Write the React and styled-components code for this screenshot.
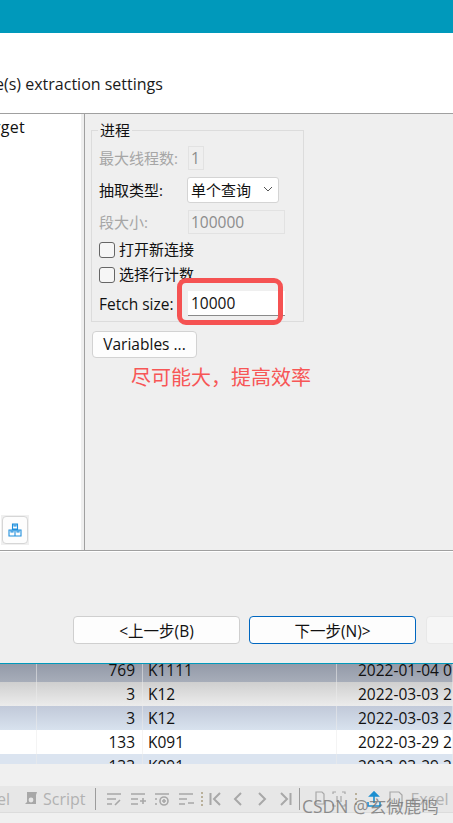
import React from "react";
import styled, { createGlobalStyle } from "styled-components";

const FONT = `"Open Sans", "Noto Sans CJK SC", "Noto Sans", sans-serif`;

const Global = createGlobalStyle`
  html, body { margin: 0; padding: 0; background: #f0f0f0; overflow: hidden; }
  body { font-family: ${FONT}; font-size: 15px; color: #111; }
`;

const Page = styled.div`
  position: relative;
  width: 453px;
  height: 823px;
  overflow: hidden;
  display: flex;
  flex-direction: column;
`;
const TitleBar = styled.div`
  height: 33px;
  background: #0099bb;
  flex: none;
`;
const Header = styled.div`
  height: 80px;
  flex: none;
  background: #fff;
  display: flex;
  align-items: flex-end;
  padding-bottom: 18px;
  box-sizing: border-box;
`;
const HeaderTitle = styled.div`
  font-size: 16px;
  line-height: 22px;
  white-space: nowrap;
  margin-left: -36.5px;
  color: #1a1a1a;
`;
const Body = styled.div`
  height: 436px;
  flex: none;
  display: flex;
  border-top: 1px solid #a0a0a0;
  border-bottom: 1px solid #a0a0a0;
  box-sizing: content-box;
  background: #efefef;
`;
const Sidebar = styled.div`
  width: 81px;
  flex: none;
  background: #fff;
  display: flex;
  flex-direction: column;
  justify-content: space-between;
  padding-bottom: 5px;
  box-sizing: border-box;
`;
const SideItem = styled.div`
  font-size: 16px;
  line-height: 26px;
  white-space: nowrap;
  margin-left: -24px;
  letter-spacing: 0.2px;
`;
const SideTool = styled.div`
  width: 28px;
  height: 30px;
  margin-left: 1px;
  background: #f0f0f0;
  display: flex;
  align-items: center;
  justify-content: center;
`;
const SideButton = styled.button`
  width: 26px;
  height: 28px;
  padding: 0;
  background: #fdfdfd;
  border: 1px solid #d6d6d6;
  border-radius: 4px;
  display: flex;
  align-items: center;
  justify-content: center;
`;
const Splitter = styled.div`
  width: 3px;
  flex: none;
  background: #efefef;
  border-right: 1px solid #a0a0a0;
  box-sizing: content-box;
`;
const Settings = styled.div`
  flex: 1;
  padding: 16px 0 0 6px;
  display: flex;
  flex-direction: column;
  align-items: flex-start;
`;
const Group = styled.div`
  position: relative;
  width: 213px;
  height: 192px;
  box-sizing: border-box;
  border: 1px solid #dcdcdc;
  padding: 15px 0 0 7px;
  display: flex;
  flex-direction: column;
`;
const Legend = styled.div`
  position: absolute;
  top: -10px;
  left: 6px;
  padding: 0 2px;
  background: #efefef;
  font-size: 15px;
  line-height: 18px;
`;
const Row = styled.div`
  display: flex;
  align-items: center;
  height: ${(p) => p.$h}px;
  margin-bottom: ${(p) => p.$gap}px;
`;
const Label = styled.span`
  width: 89px;
  flex: none;
  font-size: ${(p) => (p.$latin ? "15.5px" : "15px")};
  padding-bottom: ${(p) => (p.$latin ? "0" : "2px")};
  white-space: nowrap;
  color: ${(p) => (p.$disabled ? "#a6a6a6" : "#111")};
`;
const Field = styled.div`
  width: ${(p) => p.$w}px;
  height: 100%;
  box-sizing: border-box;
  padding-left: 2px;
  border: 1px solid ${(p) => (p.$disabled ? "#e2e2e2" : "#fff")};
  background: ${(p) => (p.$disabled ? "#efefef" : "#fff")};
  color: ${(p) => (p.$disabled ? "#8c8c8c" : "#111")};
  font-size: 15.5px;
  display: flex;
  align-items: center;
`;
const ActiveField = styled(Field)`
  border: none;
  padding-left: 3px;
  border-bottom: 1px solid #8a8a8a;
`;
const Select = styled.div`
  width: 92px;
  height: 100%;
  margin-left: -1px;
  box-sizing: border-box;
  background: #fff;
  border: 1px solid #d4d4d4;
  border-radius: 3px;
  padding: 0 5px 2px 3px;
  font-size: 15px;
  display: flex;
  align-items: center;
  justify-content: space-between;
`;
const CheckRow = styled.label`
  display: flex;
  align-items: center;
  gap: 4px;
  height: 16px;
  margin-bottom: ${(p) => p.$gap}px;
  font-size: 15px;
`;
const CheckText = styled.span`
  margin-top: -3px;
`;
const CheckBox = styled.span`
  width: 16px;
  height: 16px;
  box-sizing: border-box;
  border: 1px solid #666;
  border-radius: 3px;
  background: #f6f6f6;
`;
const PlainButton = styled.button`
  font-family: ${FONT};
  font-size: 15.5px;
  color: #111;
  background: #fdfdfd;
  border: 1px solid #d2d2d2;
  border-radius: 4px;
  padding: 0;
`;
const VariablesButton = styled(PlainButton)`
  width: 105px;
  height: 27px;
  margin-top: 9px;
  margin-left: 1px;
  padding-bottom: 2px;
`;
const Footer = styled.div`
  height: 112px;
  flex: none;
  box-sizing: border-box;
  background: #efefef;
  border-top: 1px solid #fff;
  padding: 64px 0 0 73px;
  display: flex;
  gap: 9px;
  overflow: hidden;
`;
const WizardButton = styled(PlainButton)`
  width: 167px;
  height: 28px;
  flex: none;
  border-color: ${(p) => (p.$primary ? "#0067c0" : "#cfcfcf")};
`;
const GhostButton = styled(WizardButton)`
  margin-left: 1px;
  background: #f6f6f6;
  border-color: #e8e8e8;
`;
const Table = styled.div`
  height: 101px;
  flex: none;
  box-sizing: border-box;
  border-top: 1px solid #0099bb;
  overflow: hidden;
  display: flex;
  flex-direction: column;
  justify-content: flex-end;
  background: #fff;
`;
const TableRow = styled.div`
  height: 24px;
  flex: none;
  display: grid;
  grid-template-columns: 37px 106px 194px 1fr;
  background: ${(p) => p.$bg};
  color: #111;
  font-size: 15.5px;
  line-height: 24px;
`;
const Cell = styled.div`
  box-sizing: border-box;
  border-right: 1px solid rgba(235, 235, 235, 0.55);
  white-space: nowrap;
  overflow: hidden;
  padding: 0 ${(p) => (p.$num ? "7px" : "0")} 0 ${(p) => p.$pad || 0}px;
  text-align: ${(p) => (p.$num ? "right" : "left")};
`;
const TableEnd = styled.div`
  height: 10px;
  flex: none;
  overflow: hidden;
`;
const Gap = styled.div`
  height: 22px;
  flex: none;
  background: #f0f0f0;
`;
const Toolbar = styled.div`
  height: 27px;
  flex: none;
  background: #e7e7e7;
  border-bottom: 1px solid #dcdcdc;
  box-sizing: border-box;
  display: flex;
  align-items: center;
  overflow: hidden;
  color: #b2b2b2;
`;
const ToolText = styled.span`
  font-size: 16px;
  white-space: nowrap;
  flex: none;
  margin-left: ${(p) => p.$ml || 0}px;
`;
const ToolSlot = styled.span`
  flex: none;
  width: ${(p) => p.$w || 24}px;
  margin-left: ${(p) => p.$ml || 0}px;
  height: 18px;
  display: flex;
  align-items: center;
  justify-content: center;
`;
const Divider = styled.span`
  flex: none;
  width: 1px;
  height: 22px;
  background: #9c9c9c;
  margin: 0 ${(p) => p.$r || 0}px 0 ${(p) => p.$l || 0}px;
`;
const Rest = styled.div`
  flex: 1;
  background: #f0f0f0;
`;
const Highlight = styled.div`
  position: absolute;
  left: 177px;
  top: 278px;
  width: 106px;
  height: 47px;
  box-sizing: border-box;
  border: 5px solid #f55252;
  border-radius: 9px;
  pointer-events: none;
`;
const Note = styled.div`
  position: absolute;
  left: 131px;
  top: 364px;
  font-size: 20px;
  line-height: 28px;
  color: #f75656;
  white-space: nowrap;
`;
const Watermark = styled.div`
  position: absolute;
  left: 302px;
  top: 794px;
  font-size: 17.5px;
  line-height: 24px;
  color: rgba(110, 110, 110, 0.75);
  white-space: nowrap;
`;

const Ico = ({ w = 16, h = 16, color = "#a8a8a8", sw = 1.6, children }) => (
  <svg width={w} height={h} viewBox={`0 0 ${w} ${h}`} fill="none" stroke={color} strokeWidth={sw}>
    {children}
  </svg>
);

const rows = [
  { bg: "linear-gradient(#8d94a3,#a7adb9)", n: "769", k: "K1111", d: "2022-01-04 09:15:22" },
  { bg: "linear-gradient(#cfcfcf,#ececec)", n: "3", k: "K12", d: "2022-03-03 21:15:22" },
  { bg: "linear-gradient(#c1c9d9,#d8e2ee)", n: "3", k: "K12", d: "2022-03-03 21:15:22" },
  { bg: "#ffffff", n: "133", k: "K091", d: "2022-03-29 21:15:22" },
];

const DataRow = ({ r }) => (
  <TableRow $bg={r.bg}>
    <Cell />
    <Cell $num>{r.n}</Cell>
    <Cell $pad={5}>{r.k}</Cell>
    <Cell $pad={21}>{r.d}</Cell>
  </TableRow>
);

export default function App() {
  return (
    <Page>
      <Global />
      <TitleBar />
      <Header>
        <HeaderTitle>Table(s) extraction settings</HeaderTitle>
      </Header>
      <Body>
        <Sidebar>
          <SideItem>Target</SideItem>
          <SideTool>
            <SideButton aria-label="packages">
              <Ico w={14} h={14} color="#1f8fdc" sw={1.1}>
                <path d="M4.5 1h5v5h-5zM1 7h6v6H1zM7 7h6v6H7zM6 1v2h2V1M3 7v2h2V7M9 7v2h2V7" />
              </Ico>
            </SideButton>
          </SideTool>
        </Sidebar>
        <Splitter />
        <Settings>
          <Group>
            <Legend>进程</Legend>
            <Row $h={24} $gap={7}>
              <Label $disabled>最大线程数:</Label>
              <Field $w={16} $disabled>1</Field>
            </Row>
            <Row $h={26} $gap={7}>
              <Label>抽取类型:</Label>
              <Select>
                单个查询
                <svg width="10" height="6" viewBox="0 0 10 6" fill="none" stroke="#555" strokeWidth="1">
                  <path d="M1 1l4 4 4-4" />
                </svg>
              </Select>
            </Row>
            <Row $h={24} $gap={8}>
              <Label $disabled>段大小:</Label>
              <Field $w={97} $disabled>100000</Field>
            </Row>
            <CheckRow $gap={9}>
              <CheckBox />
              <CheckText>打开新连接</CheckText>
            </CheckRow>
            <CheckRow $gap={8}>
              <CheckBox />
              <CheckText>选择行计数</CheckText>
            </CheckRow>
            <Row $h={25} $gap={0}>
              <Label $latin>Fetch size:</Label>
              <ActiveField $w={97}>10000</ActiveField>
            </Row>
          </Group>
          <VariablesButton>Variables ...</VariablesButton>
        </Settings>
      </Body>
      <Footer>
        <WizardButton>&lt;上一步(B)</WizardButton>
        <WizardButton $primary>下一步(N)&gt;</WizardButton>
        <GhostButton />
      </Footer>
      <Table>
        {rows.map((r, i) => (
          <DataRow key={i} r={r} />
        ))}
        <TableEnd>
          <DataRow r={{ bg: "#dbe4f0", n: "133", k: "K091", d: "2022-03-29 21:15:22" }} />
        </TableEnd>
      </Table>
      <Gap />
      <Toolbar>
        <ToolText $ml={-28}>Excel</ToolText>
        <ToolSlot $w={14} $ml={14}>
          <Ico w={14} h={16} sw={0}>
            <path fill="#a8a8a8" stroke="none" d="M3 1h10l-1 3v9H1l2-2z" />
            <circle cx="7" cy="9" r="2.4" fill="#e7e7e7" stroke="none" />
          </Ico>
        </ToolSlot>
        <ToolText $ml={5}>Script</ToolText>
        <Divider $l={10} $r={6} />
        <ToolSlot>
          <Ico>
            <path d="M1 3h14M1 8h9M1 13h5M9 14l5-5" />
          </Ico>
        </ToolSlot>
        <ToolSlot>
          <Ico>
            <path d="M1 3h14M1 8h7M1 13h7M10 10h6M13 7v6" />
          </Ico>
        </ToolSlot>
        <ToolSlot>
          <Ico>
            <path d="M1 3h14M1 8h2M1 13h2" />
            <circle cx="10" cy="10" r="4" />
            <path d="M8 10h4M10 8v4" />
          </Ico>
        </ToolSlot>
        <ToolSlot>
          <Ico>
            <path d="M1 3h14M1 8h8M1 13h6M10 12h6" />
          </Ico>
        </ToolSlot>
        <ToolSlot $w={8}>
          <Ico w={2} h={16} sw={2} color="#b9b09a">
            <path d="M1 1v14" strokeDasharray="2 2" />
          </Ico>
        </ToolSlot>
        <ToolSlot $w={19}>
          <Ico w={13} h={16} sw={2}>
            <path d="M1.5 2v12M11 2L5 8l6 6" />
          </Ico>
        </ToolSlot>
        <ToolSlot $w={26}>
          <Ico w={10} h={16} sw={2}>
            <path d="M8 2L2 8l6 6" />
          </Ico>
        </ToolSlot>
        <ToolSlot $w={22}>
          <Ico w={10} h={16} sw={2}>
            <path d="M2 2l6 6-6 6" />
          </Ico>
        </ToolSlot>
        <ToolSlot $w={24}>
          <Ico w={13} h={16} sw={2}>
            <path d="M11.5 2v12M2 2l6 6-6 6" />
          </Ico>
        </ToolSlot>
        <Divider $l={2} $r={7} />
        <ToolSlot $w={24}>
          <Ico w={12} h={16} sw={1.2}>
            <path d="M3 1h6l2 2v10H3z" />
          </Ico>
        </ToolSlot>
        <ToolSlot $w={16}>
          <Ico w={14} h={16} sw={1.2}>
            <path d="M1 3V1h3M10 1h3v2M1 13v2h3M10 15h3v-2M5 5v6M9 5v6" />
          </Ico>
        </ToolSlot>
        <ToolSlot $w={18}>
          <Ico w={2} h={16} sw={2} color="#b9b09a">
            <path d="M1 2v12" strokeDasharray="2 3" />
          </Ico>
        </ToolSlot>
        <ToolSlot $w={18}>
          <Ico w={16} h={16} color="#1c8fd0" sw={1.6}>
            <path d="M8 12V3" />
            <path d="M4 5l4-4 4 4z" fill="#1c8fd0" />
            <path d="M2 11v4h12v-4" />
          </Ico>
        </ToolSlot>
        <ToolSlot $w={26}>
          <Ico w={14} h={16} sw={1.2}>
            <path d="M1 1h9l3 3v11H1z" />
          </Ico>
        </ToolSlot>
        <ToolText $ml={1}>Excel</ToolText>
      </Toolbar>
      <Rest />
      <Highlight />
      <Note>尽可能大，提高效率</Note>
      <Watermark>CSDN @玄微鹿鸣</Watermark>
    </Page>
  );
}
